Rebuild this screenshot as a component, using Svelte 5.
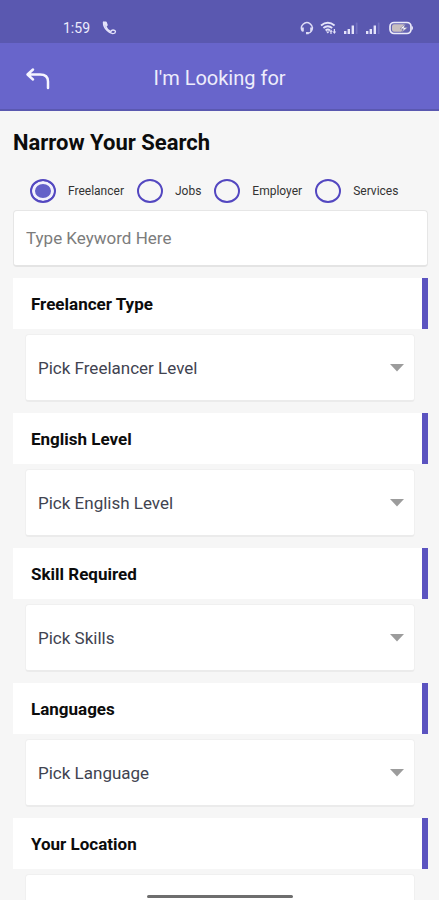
<script>
  let keyword = $state('');
  let kind = $state('Freelancer');
  const kinds = ['Freelancer', 'Jobs', 'Employer', 'Services'];
  const sections = [
    { id: 'type', title: 'Freelancer Type', hint: 'Pick Freelancer Level' },
    { id: 'english', title: 'English Level', hint: 'Pick English Level' },
    { id: 'skill', title: 'Skill Required', hint: 'Pick Skills' },
    { id: 'languages', title: 'Languages', hint: 'Pick Language' },
    { id: 'location', title: 'Your Location', hint: 'Pick Location' }
  ];
</script>

<div class="screen">
  <div class="status">
    <div class="left">
      <span class="time">1:59</span>
      <svg width="16" height="16" viewBox="0 0 16 16" aria-hidden="true">
        <path d="M2.5 2.2H5L6 5 4.8 6.4C5.6 8.800 7.400 10.600 9.800 11.600" fill="none" stroke="#e4e3fa" stroke-width="1.500" stroke-linejoin="round" />
        <path d="M2.500 2.200C2.400 5.200 4 8.400 6.200 10.600 8.400 12.800 11.600 14.400 13.800 13Q15.400 11 13 10.200 10.800 9.600 9.800 11.600" fill="none" stroke="#e4e3fa" stroke-width="1.400" stroke-linecap="round" />
        <path d="M2.500 2.200H5L6 5 3.600 6.400Z" fill="#e4e3fa" />
      </svg>
    </div>
    <div class="right">
      <svg width="14" height="14" viewBox="0 0 14 14" aria-hidden="true">
        <path d="M2.6 10.4A5.4 5.4 0 1 1 11.6 9.8Q10.4 12.4 7.4 12.2" fill="none" stroke="#dedcf6" stroke-width="1.4" />
        <path d="M1 6.4h2.8v4.2H2.4ZM13 6.4h-2.8v4.2h1.4ZM6 11h2.6v2.2H6Z" fill="#dedcf6" />
      </svg>
      <svg width="17" height="14" viewBox="0 0 17 14" aria-hidden="true">
        <path d="M1 4.4Q7.8-1 14.6 4.4M3.4 7Q7.8 3.4 12.2 7M5.6 9.4Q7.8 7.6 10 9.4" fill="none" stroke="#e4e3fa" stroke-width="1.9" />
        <path d="M6 10.400h3.600L7.800 12.600ZM11 8.400l1.700 2.400h-1.100V13h-1.200v-2.200H9.600ZM14.400 13l-1.800-2.400h1.200V8H15v2.600h1.200Z" fill="#e4e3fa" />
      </svg>
      {#each ['sim1', 'sim2'] as sim (sim)}
        <svg width="16" height="14" viewBox="0 0 16 14" aria-hidden="true">
          <path d="M1 10h2.400v3H1ZM4.600 8H7v5H4.600ZM8.600 4.600H11V13H8.600Z" fill="#e4e3fa" />
          <path d="M12.800 1.600h1.700V13h-1.700Z" fill="#7270c0" />
        </svg>
      {/each}
      <svg class="battery" width="25" height="14" viewBox="0 0 25 14" aria-hidden="true">
        <rect x="1" y="1.500" width="21" height="11" rx="4" fill="#6664b4" stroke="#ecebfa" stroke-width="1.700" />
        <path d="M5 3.200h10l-2.500 7.600H5a2 2 0 0 1-2-2V5.200a2 2 0 0 1 2-2Z" fill="#c9bfc0" />
        <path d="m16.500 2.800-5.500 5h3.500l-2 3.600 6-5h-3.600Z" fill="#fff" stroke="#77729f" stroke-width=".6" />
        <path d="M22.800 4.500q2.400 2.500 0 5Z" fill="#ecebfa" />
      </svg>
    </div>
  </div>

  <header>
    <button class="back" aria-label="Back">
      <svg width="26" height="24" viewBox="0 0 26 24" aria-hidden="true">
        <path d="M8 3.500 2.500 8.500 8 13.500M3 8.500H15Q23 8.500 23 15.500V22" fill="none" stroke="#f6f5ff" stroke-width="2.500" stroke-linecap="round" stroke-linejoin="round" />
      </svg>
    </button>
    <h1>I'm Looking for</h1>
  </header>

  <main>
    <h2>Narrow Your Search</h2>
    <div class="kinds" role="radiogroup" aria-label="Search for">
      {#each kinds as k (k)}
        <label><input type="radio" name="kind" value={k} bind:group={kind} />{k}</label>
      {/each}
    </div>
    <input class="keyword" type="text" placeholder="Type Keyword Here" aria-label="Keyword" bind:value={keyword} />

    {#each sections as s (s.id)}
      <section>
        <label class="title" for={s.id}>{s.title}</label>
        <div class="picker">
          <select id={s.id}><option>{s.hint}</option></select>
          <svg width="14" height="8" viewBox="0 0 14 8" aria-hidden="true"><path d="M0 0h14L7 7.500Z" fill="#9c9c9c" /></svg>
        </div>
      </section>
    {/each}
  </main>
  <div class="home"></div>
</div>

<style>
  :global(body) {
    margin: 0;
  }
  .screen {
    height: 100vh;
    display: flex;
    flex-direction: column;
    overflow: hidden;
    background: #f6f6f6;
    font-family: Roboto, sans-serif;
    color: #0c0c0c;
  }
  .status {
    flex: none;
    box-sizing: border-box;
    height: 43px;
    padding: 12px 25px 0 63px;
    display: flex;
    justify-content: space-between;
    align-items: center;
    background: #5a58b0;
    color: #ecebfc;
  }
  .left,
  .right {
    display: flex;
    align-items: center;
  }
  .left {
    gap: 11px;
  }
  .right {
    gap: 6px;
  }
  .battery {
    margin-left: 2px;
  }
  .time {
    font-size: 14px;
    line-height: 16px;
  }
  header {
    flex: none;
    box-sizing: border-box;
    height: 68px;
    padding-top: 3px;
    display: grid;
    grid-template-columns: 76px 1fr 76px;
    align-items: center;
    background: #6865cb;
    border-bottom: 2px solid #5a58b0;
  }
  .back {
    justify-self: center;
    display: flex;
    padding: 0;
    border: 0;
    background: none;
    cursor: pointer;
  }
  h1 {
    margin: 0;
    text-align: center;
    font-size: 20px;
    font-weight: 400;
    line-height: 24px;
    color: #eeedfc;
  }
  main {
    flex: 1;
    min-height: 0;
    padding: 18px 11px 0 13px;
    overflow-y: auto;
    scrollbar-width: none;
  }
  h2 {
    margin: 0;
    font-size: 22px;
    font-weight: 700;
    line-height: 28px;
  }
  .kinds {
    display: flex;
    gap: 13px;
    margin: 22px 0 7px;
    padding-left: 17px;
  }
  .kinds label {
    display: flex;
    align-items: center;
    gap: 12px;
    font-size: 12px;
    line-height: 24px;
    color: #333;
  }
  .kinds input {
    appearance: none;
    box-sizing: border-box;
    width: 26px;
    height: 24px;
    margin: 0;
    border: 2px solid #5347c0;
    border-radius: 50%;
  }
  .kinds input:checked {
    background: #6360c8;
    box-shadow: inset 0 0 0 3px #f2f1fc;
  }
  .keyword {
    display: block;
    box-sizing: border-box;
    width: 100%;
    height: 57px;
    margin: 0 0 11px;
    padding: 0 12px;
    border: 1px solid #e6e6e6;
    border-bottom: 2px solid #e4e4e4;
    border-radius: 4px;
    background: #fff;
    font: 17px/24px Roboto, sans-serif;
    color: #333;
  }
  .keyword::placeholder {
    color: #7c7c7c;
    opacity: 1;
  }
  .title {
    display: block;
    padding: 14px 18px 13px;
    border-right: 6px solid #5b53c0;
    background: #fff;
    font-size: 17px;
    font-weight: 700;
    line-height: 24px;
  }
  .picker {
    display: grid;
    align-items: center;
    margin: 5px 13px 11px 12px;
  }
  .picker select,
  .picker svg {
    grid-area: 1 / 1;
  }
  .picker svg {
    justify-self: end;
    margin-right: 11px;
    pointer-events: none;
  }
  select {
    appearance: none;
    box-sizing: border-box;
    width: 100%;
    height: 68px;
    padding: 0 36px 0 12px;
    border: 1px solid #f0f0f0;
    border-bottom: 2px solid #ebebeb;
    border-radius: 4px;
    background: #fff;
    font: 17px/24px Roboto, sans-serif;
    color: #414350;
  }
  .home {
    position: fixed;
    bottom: 2px;
    left: 50%;
    width: 146px;
    height: 3px;
    border-radius: 2px;
    background: #6e6e6e;
    transform: translateX(-50%);
  }
</style>
